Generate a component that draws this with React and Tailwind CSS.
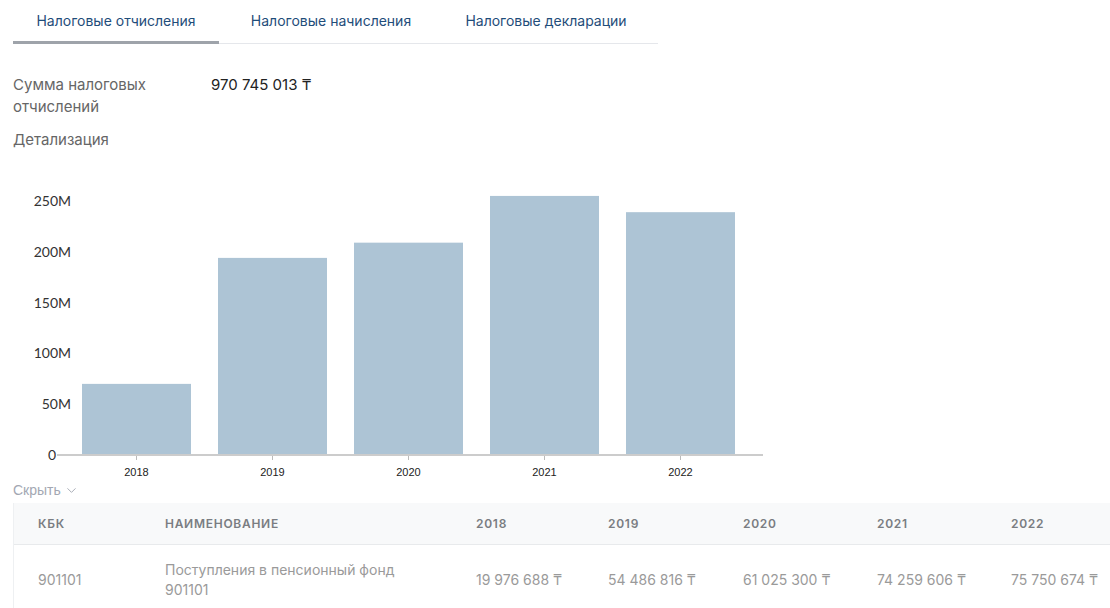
import { ChevronDown } from 'lucide-react'

const years = [
  { year: '2018', value: 70 },
  { year: '2019', value: 194 },
  { year: '2020', value: 209 },
  { year: '2021', value: 255 },
  { year: '2022', value: 239 },
]

const rows = [
  {
    kbk: '901101',
    name: 'Поступления в пенсионный фонд',
    code: '901101',
    amounts: ['19 976 688 ₸', '54 486 816 ₸', '61 025 300 ₸', '74 259 606 ₸', '75 750 674 ₸'],
  },
]

function Tabs() {
  const tabs = ['Налоговые отчисления', 'Налоговые начисления', 'Налоговые декларации']
  return (
    <div className="flex w-[645px] border-b border-[#e5e7eb]">
      {tabs.map((t, i) => (
        <button
          key={t}
          className={`w-[206px] mr-[9px] h-[44px] text-[14px] text-[#1f4d7a] -mb-px ${
            i === 0 ? 'border-b-[3px] border-[#9ea3aa]' : 'border-b-[3px] border-transparent'
          }`}
        >
          {t}
        </button>
      ))}
    </div>
  )
}

function Chart() {
  const zeroY = 295
  const scale = 254 / 250
  const ticks = [0, 50, 100, 150, 200, 250]
  return (
    <svg width="780" height="330" className="block" style={{ fontFamily: 'Lato, sans-serif' }}>
      {ticks.map((t) => (
        <text
          key={t}
          x={t === 0 ? 56 : 71}
          y={zeroY - t * scale + 5}
          textAnchor="end"
          fontSize="14"
          fill="#333"
        >
          {t === 0 ? '0' : `${t}M`}
        </text>
      ))}
      {years.map((d, i) => {
        const x = 82 + i * 136
        const h = d.value * scale
        return (
          <g key={d.year}>
            <rect x={x} y={zeroY - h} width="109" height={h} fill="#adc4d5" />
            <line x1={x + 54.5} x2={x + 54.5} y1={zeroY} y2={zeroY + 5} stroke="#bbb" />
            <text
              x={x + 54.5}
              y={zeroY + 21}
              textAnchor="middle"
              fontSize="11"
              fill="#222"
              style={{ fontFamily: '"Liberation Sans", Arial, sans-serif' }}
            >
              {d.year}
            </text>
          </g>
        )
      })}
      <line x1="57" x2="763" y1={zeroY} y2={zeroY} stroke="#ccc" strokeWidth="2" />
    </svg>
  )
}

export default function App() {
  return (
    <div className="w-[1110px] h-[608px] overflow-hidden bg-white pl-[13px] font-['Inter',sans-serif]">
      <Tabs />
      <div className="mt-[30px] flex text-[15px] leading-[22px]">
        <div className="w-[198px] text-[#666]">
          Сумма налоговых
          <br />
          отчислений
        </div>
        <div className="text-[#222]">970 745 013 ₸</div>
      </div>
      <div className="mt-[11px] text-[15px] leading-[22px] text-[#666]">Детализация</div>
      <div className="-ml-[13px] mt-[9px]">
        <Chart />
      </div>
      <button className="-mt-[10px] flex items-center gap-[3px] text-[14px] text-[#a3a7b2] font-['Liberation_Sans',sans-serif]">
        Скрыть
        <ChevronDown size={15} strokeWidth={1.5} />
      </button>
      <div className="mt-[2px] w-[1110px] border-l border-[#eef0f2]">
        <div className="grid grid-cols-[127px_311px_132px_135px_134px_134px_1fr] h-[42px] items-center bg-[#f8f9fa] border-b border-[#e8eaec] text-[12px] font-semibold tracking-[0.06em] text-[#7a7d82]">
          <div className="pl-[24px]">КБК</div>
          <div className="pl-[24px]">НАИМЕНОВАНИЕ</div>
          {years.map((d) => (
            <div key={d.year} className="pl-[24px]">
              {d.year}
            </div>
          ))}
        </div>
        {rows.map((r) => (
          <div
            key={r.kbk}
            className="grid grid-cols-[127px_311px_132px_135px_134px_134px_1fr] items-center py-[15px] text-[14px] leading-[20px] text-[#9a9a9a]"
          >
            <div className="pl-[24px]">{r.kbk}</div>
            <div className="pl-[24px]">
              <div>{r.name}</div>
              <div>{r.code}</div>
            </div>
            {r.amounts.map((a, i) => (
              <div key={i} className="pl-[24px]">
                {a}
              </div>
            ))}
          </div>
        ))}
      </div>
    </div>
  )
}
